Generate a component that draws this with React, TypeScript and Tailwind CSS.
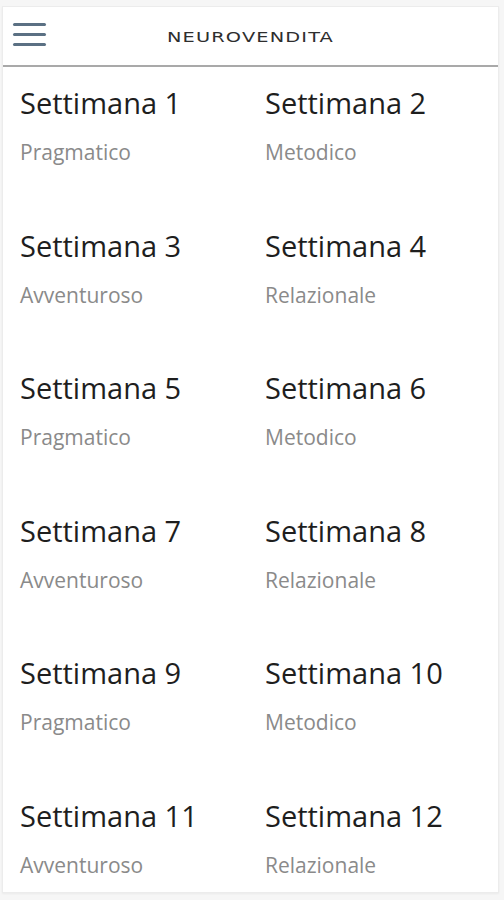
const WEEKS = [
  { n: 1, type: 'Pragmatico' },
  { n: 2, type: 'Metodico' },
  { n: 3, type: 'Avventuroso' },
  { n: 4, type: 'Relazionale' },
  { n: 5, type: 'Pragmatico' },
  { n: 6, type: 'Metodico' },
  { n: 7, type: 'Avventuroso' },
  { n: 8, type: 'Relazionale' },
  { n: 9, type: 'Pragmatico' },
  { n: 10, type: 'Metodico' },
  { n: 11, type: 'Avventuroso' },
  { n: 12, type: 'Relazionale' },
];

export default function App() {
  return (
    <div className="min-h-[900px] w-[504px] bg-[#f6f6f6] pt-[6px] font-['Open_Sans',sans-serif]">
      <div className="ml-[2px] w-[497px] h-[887px] bg-white border border-[#ececec] shadow-[0_1px_2px_rgba(0,0,0,0.05)]">
        {/* Header */}
        <header className="relative h-[60px] flex items-center justify-center border-b-2 border-[#a9a9a9]">
          <button className="absolute left-[10px] top-[16px] flex flex-col gap-[7px]">
            <span className="block w-[33px] h-[3px] rounded-full bg-[#5b7083]" />
            <span className="block w-[33px] h-[3px] rounded-full bg-[#5b7083]" />
            <span className="block w-[33px] h-[3px] rounded-full bg-[#5b7083]" />
          </button>
          <h1 className="text-[14px] leading-none tracking-[0.06em] text-[#2e2e2e] font-['DejaVu_Sans',sans-serif] scale-x-[1.38] ml-[0px] mt-[2px]">
            NEUROVENDITA
          </h1>
        </header>

        {/* Settimane */}
        <div className="grid grid-cols-2 pt-[16px] pl-[17px]">
          {WEEKS.map((w) => (
            <div key={w.n} className={`h-[142.5px] flex flex-col ${w.n % 2 === 0 ? 'pl-[6px]' : ''}`}>
              <div className="text-[29px] leading-10 text-[#1e1e1e]">Settimana {w.n}</div>
              <div className="mt-[15px] text-[21px] leading-[28px] text-[#8a8a8a]">{w.type}</div>
            </div>
          ))}
        </div>
      </div>
    </div>
  );
}
